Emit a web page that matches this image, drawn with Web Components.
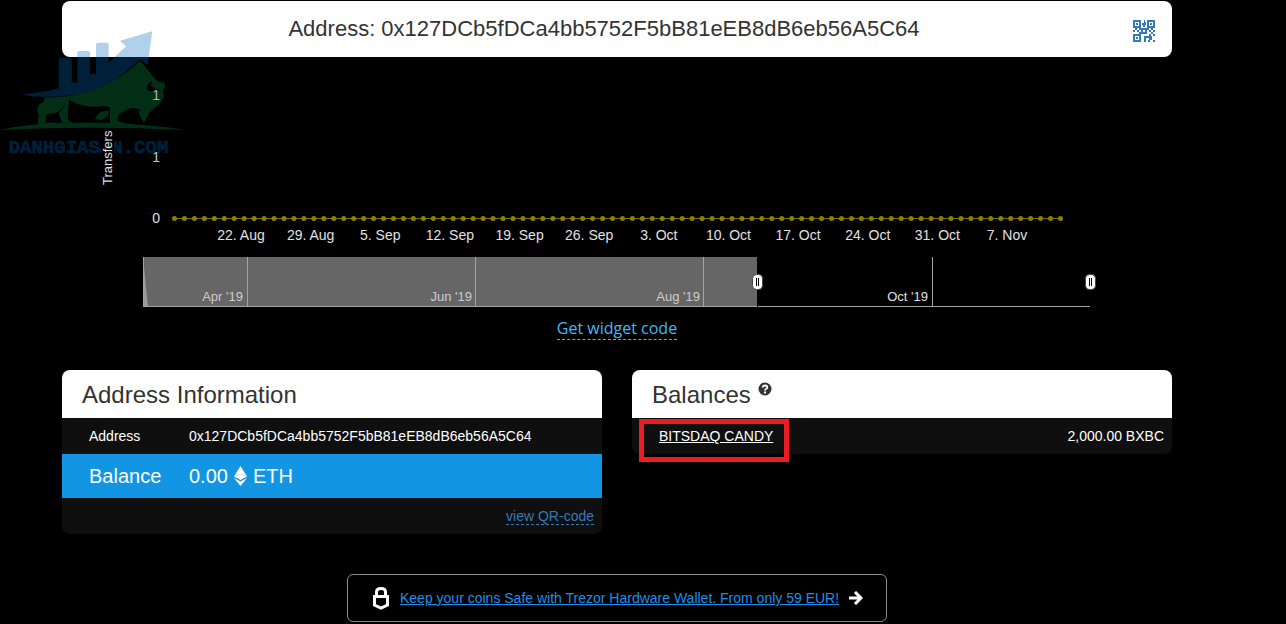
<!DOCTYPE html>
<html lang="en">
<head>
<meta charset="utf-8">
<title>Address overview</title>
<style>
body { margin: 0; background: #000; color: #fff; font: 14px/20px "Liberation Sans", Arial, sans-serif; }
</style>
</head>
<body>
<address-page></address-page>
<script>
const define = (name, html, setup) => customElements.define(name, class extends HTMLElement {
  constructor() {
    super();
    const t = document.createElement('template');
    t.innerHTML = html;
    this.attachShadow({ mode: 'open' }).append(t.content.cloneNode(true));
    if (setup) setup(this.shadowRoot);
  }
});

define('site-watermark', `
<style>
:host { display: block; position: absolute; left: 0; top: 0; width: 190px; height: 160px; opacity: .3; pointer-events: none; }
svg { display: block; width: 100%; height: 100%; }
text { font: bold 57px "Liberation Mono", monospace; stroke: #0068bd; stroke-width: 2px; }
</style>
<svg viewBox="0 0 570 480" aria-hidden="true">
  <g fill="#0068bd">
    <path d="M62 284 Q120 280 176 265 V181 Q176 173 184 173 H207 Q215 173 215 181 V249 L223 246 L232 249 V159 Q232 153 238 153 H264 Q270 153 270 159 V224 L280 220 L288 224 V134 Q288 128 294 128 H320 Q326 128 326 134 V188 L378 139 L360 122 L457 94 L443 194 L420 178 Q330 268 225 284 Q140 297 62 284Z"/>
    <text x="26" y="459">DANHGIASAN.COM</text>
  </g>
  <path fill="#08994a" fill-rule="evenodd" d="M134 292 Q200 294 260 276 Q350 248 421 182 L465 237 Q485 254 491 244 Q499 257 489 270 L491 290 L479 312 Q462 325 447 340 L432 369 L417 342 L416 334 L423 332 Q405 316 378 331 Q348 343 353 360 Q361 372 430 375 Q500 380 554 390 Q270 376 0 390 Q55 378 113 373 L116 344 Q103 316 131 306Z M202 308 L179 332 Q168 340 139 343 L137 368 H187 L176 340Z M207 299 L203 350 Q204 368 224 368 H330 V322 Q322 316 288 320 Q245 321 207 299Z M455 241 Q435 260 441 271 Q463 278 482 270 Q465 268 454 258Z"/>
  <path fill="#08994a" d="M284 357 Q298 329 327 333 Q329 348 306 360Z"/>
</svg>`);

define('page-title', `
<style>
:host { display: grid; grid-template-columns: 56px 1fr 56px; align-items: center; min-height: 56px; background: #fff; color: #333; border-radius: 8px; }
h1 { grid-column: 2; margin: 0 26px 0 0; font: 22px/28px "Liberation Sans", Arial, sans-serif; text-align: center; overflow-wrap: anywhere; }
button { justify-self: center; display: flex; padding: 0; border: 0; background: none; cursor: pointer; margin-top: 4px; }
</style>
<h1><slot></slot></h1>
<button aria-label="Show QR code"><svg width="22" height="22" viewBox="0 0 22 22" fill="#337ab7" shape-rendering="crispEdges">
<path fill-rule="evenodd" d="M0 0h8v8H0zM2 2v4h4V2zM14 0h8v8h-8zM16 2v4h4V2zM0 14h8v8H0zM2 16v4h4v-4z"/>
<path d="M3 3h2v2H3zM17 3h2v2h-2zM3 17h2v2H3zM11 0h1v2h1v3h-1v2h-2V5H9V3h2zM0 10h2v2H0zM2 8h2v2H2zM4 10h2v2H4zM6 8h2v2H6zM8 8h8v2h-2v2h-2v-2h-2v2H8zM6 12h8v2H6zM16 10h2v2h-2zM18 8h2v2h-2zM20 10h2v2h-2zM18 12h2v2h-2zM16 14h2v2h-2zM20 14h2v2h-2zM11 16h5v2h-3v4h-2zM16 16h3v4h-3zM15 20h2v2h-2zM20 20h2v2h-2z"/></svg></button>`);

define('transfers-chart', `
<style>
:host { display: block; position: relative; }
svg { display: block; width: 100%; height: auto; }
text { fill: #e0e0e3; font: 14px "Liberation Sans", Arial, sans-serif; }
.small { font-size: 13px; }
.past { fill: #ccc; }
</style>
<svg viewBox="0 0 1110 252" role="img" aria-label="Transfers per day">
  <rect x="39" y="71" width="13" height="58"/>
  <text class="small" transform="translate(50 128) rotate(-90)">Transfers</text>
  <g text-anchor="end"><text x="98" y="43" style="fill:#a3bfae">1</text><text x="98" y="105" style="fill:#bcc8d0">1</text><text x="98" y="166">0</text></g>
  <path d="M112 161.5H998" stroke="#7d7400"/>
  <g id="dots" fill="#8b8100"></g>
  <g id="dates" text-anchor="middle"></g>
  <rect x="81" y="200" width="614" height="50" fill="#666"/>
  <path d="M81 200L86 250H81Z" fill="#999"/>
  <path d="M81.5 200V250M185.500 200V249M413.500 200V249M641.500 200V249M870.500 200V249M81 249.500H695M696 249.500H1028" stroke="#a3a3a3"/>
  <g text-anchor="end"><text class="small past" x="181" y="244">Apr '19</text><text class="small past" x="410" y="244">Jun '19</text><text class="small past" x="638" y="244">Aug '19</text><text class="small" x="866" y="244">Oct '19</text></g>
  <g id="handle"><rect x="690.500" y="217.500" width="10" height="15" rx="4" fill="#fff" stroke="#444"/><path d="M694.500 221v8M696.500 221v8" stroke="#000"/></g>
  <use href="#handle" x="333"/>
</svg>`, root => {
  const ns = 'http://www.w3.org/2000/svg';
  const add = (parent, tag, attrs, text = '') => {
    const el = document.createElementNS(ns, tag);
    for (const k in attrs) el.setAttribute(k, attrs[k]);
    el.textContent = text;
    parent.append(el);
  };
  const dots = root.getElementById('dots');
  for (let i = 0; i < 90; i++) add(dots, 'circle', { cx: 112.5 + i * 886 / 89, cy: 161.5, r: 2.5 });
  const dates = root.getElementById('dates');
  ['22. Aug','29. Aug','5. Sep','12. Sep','19. Sep','26. Sep','3. Oct','10. Oct','17. Oct','24. Oct','31. Oct','7. Nov']
    .forEach((d, i) => add(dates, 'text', { x: 179 + i * 766 / 11, y: 183 }, d));
});

define('info-card', `
<style>
:host { display: block; background: #0f0f0f; border-radius: 8px; }
h2 { display: flex; align-items: center; gap: 7px; margin: 0; padding: 2px 20px 0; height: 46px; border-radius: 8px 8px 0 0; background: #fff; color: #333; font: 24px/46px "Liberation Sans", Arial, sans-serif; }
</style>
<h2><slot name="title"></slot><slot name="icon"></slot></h2>
<slot></slot>`);

define('address-details', `
<style>
:host { display: block; }
table { width: 100%; border-collapse: collapse; }
th, td { height: 36px; padding: 0; font-weight: normal; text-align: left; }
th { width: 100px; padding-left: 27px; }
.balance { background: #1295e2; font-size: 20px; }
.balance th, .balance td { height: 44px; }
.sum { display: flex; align-items: center; gap: 6px; }
p { margin: 0; padding: 8px; text-align: right; line-height: 20px; }
a { color: #337ab7; text-decoration: none; border-bottom: 1px dashed; }
</style>
<table>
<tr><th scope="row">Address</th><td>0x127DCb5fDCa4bb5752F5bB81eEB8dB6eb56A5C64</td></tr>
<tr class="balance"><th scope="row">Balance</th><td><div class="sum"><span>0.00</span><svg width="13" height="20" viewBox="0 0 13 20" fill="#fff" aria-hidden="true"><path d="M6.500 0L13 10.500L6.500 14L0 10.500ZM0 12L6.500 15.500L13 12L6.500 20Z"/><path d="M1 10.300L6.500 8L12 10.300" fill="none" stroke="#1295e2" stroke-opacity=".25"/></svg><span>ETH</span></div></td></tr>
</table>
<p><a href="#qr">view QR-code</a></p>`);

define('token-list', `
<style>
:host { display: block; }
table { width: 100%; border-collapse: collapse; }
td { height: 36px; padding: 0 8px 0 27px; }
td + td { text-align: right; }
.mark { position: relative; display: inline-block; }
.mark::after { content: ""; position: absolute; inset: -7px -16px -16px -20px; border: 5px solid #ed1c24; pointer-events: none; }
a { color: #fff; text-decoration: underline; }
</style>
<table><tr><td><span class="mark"><a href="#token">BITSDAQ CANDY</a></span></td><td>2,000.00 BXBC</td></tr></table>`);

define('wallet-promo', `
<style>
:host { display: flex; align-items: center; box-sizing: border-box; width: 540px; max-width: 100%; min-height: 48px; padding: 0 16px 0 24px; border: 1px solid #8c8c8c; border-radius: 6px; }
a { margin: 0 10px; color: #1c8fe8; text-decoration: underline; }
svg { flex: none; }
</style>
<svg width="18" height="24" viewBox="0 0 18 24" fill="none" stroke="#fff" stroke-width="3" aria-hidden="true"><path d="M4.500 9V6Q4.500 2.500 9 2.500Q13.500 2.500 13.500 6V9M2.500 10.500H15.500V19L9 22L2.500 19Z"/></svg>
<a href="#trezor"><slot></slot></a>
<svg width="14" height="14" viewBox="0 0 14 14" fill="none" stroke="#fff" stroke-width="3" aria-hidden="true"><path d="M0 7H12M6 1L12 7L6 13"/></svg>`);

define('address-page', `
<style>
:host { display: block; position: relative; padding: 1px 114px 0 62px; }
main { max-width: 1110px; margin: 0 auto; }
.widget { display: flex; justify-content: center; margin-top: 8px; font: 16px/22px "Open Sans", sans-serif; }
.widget a { color: #45b8f5; text-decoration: none; border-bottom: 1px dashed; }
.cards { display: grid; grid-template-columns: repeat(auto-fit, minmax(400px, 1fr)); gap: 30px; align-items: start; margin-top: 30px; }
wallet-promo { margin: 40px auto 0; }
info-card svg { margin-bottom: 12px; }
transfers-chart { z-index: 1; }
</style>
<main>
  <page-title>Address: 0x127DCb5fDCa4bb5752F5bB81eEB8dB6eb56A5C64</page-title>
  <site-watermark></site-watermark>
  <transfers-chart></transfers-chart>
  <div class="widget"><a href="#widget">Get widget code</a></div>
  <div class="cards">
    <info-card><span slot="title">Address Information</span><address-details></address-details></info-card>
    <info-card><span slot="title">Balances</span>
      <svg slot="icon" width="14" height="14" viewBox="0 0 14 14" aria-hidden="true"><circle cx="7" cy="7" r="6.500" fill="#333"/><path d="M4.700 5.500Q4.700 3.500 7 3.500Q9.300 3.500 9.300 5.300Q9.300 6.300 8 7Q7 7.500 7 8.500" fill="none" stroke="#fff" stroke-width="1.800"/><path d="M6 9.500h2v2H6z" fill="#fff"/></svg>
      <token-list></token-list></info-card>
  </div>
  <wallet-promo>Keep your coins Safe with Trezor Hardware Wallet. From only 59 EUR!</wallet-promo>
</main>`);
</script>
</body>
</html>
